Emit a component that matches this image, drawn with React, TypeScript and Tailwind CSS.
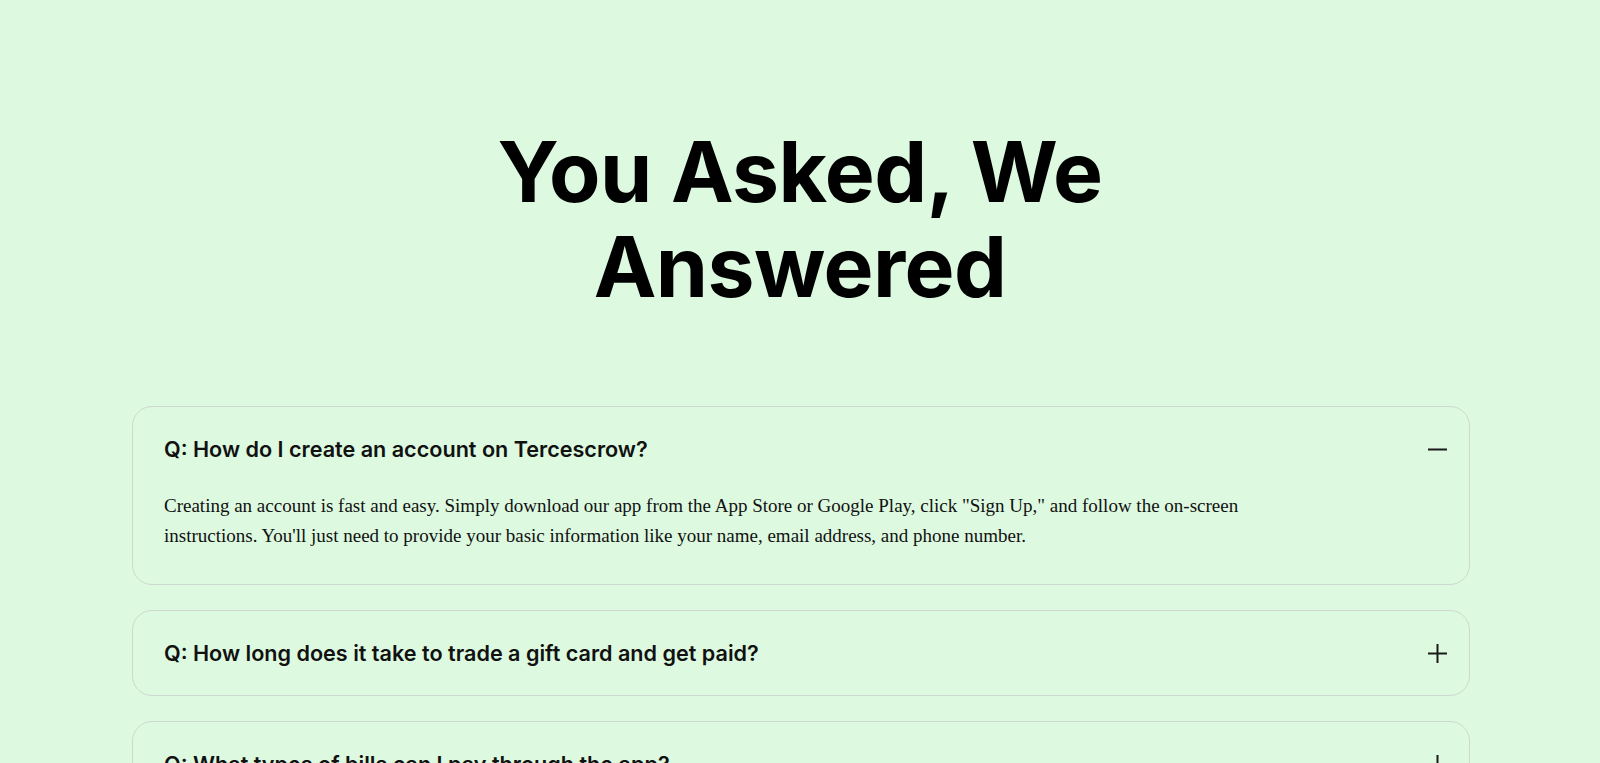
import { useState } from 'react';

const faqs = [
  {
    q: 'Q: How do I create an account on Tercescrow?',
    a: 'Creating an account is fast and easy. Simply download our app from the App Store or Google Play, click "Sign Up," and follow the on-screen instructions. You\'ll just need to provide your basic information like your name, email address, and phone number.',
  },
  {
    q: 'Q: How long does it take to trade a gift card and get paid?',
    a: 'Most trades are completed within minutes. Once your card is verified, your payment is credited to your wallet instantly.',
  },
  {
    q: 'Q: What types of bills can I pay through the app?',
    a: 'You can pay for airtime, data, electricity, cable TV subscriptions and more, all from one place.',
  },
];

function Icon({ open }: { open: boolean }) {
  return (
    <svg width="19" height="19" viewBox="0 0 19 19" fill="none" stroke="#1a1a1a" strokeWidth="2">
      <path d="M0 9.5h19" />
      {!open && <path d="M9.5 0v19" />}
    </svg>
  );
}

export default function App() {
  const [openIndex, setOpenIndex] = useState<number | null>(0);

  return (
    <div className="min-h-screen bg-[#ddf9e0] pb-24 font-['Liberation_Serif',serif]">
      {/* Heading */}
      <h1 className="mx-auto max-w-[760px] pt-[124px] text-center font-['Inter',sans-serif] text-[84px] font-bold leading-[95px] tracking-[-0.6px] text-black">
        You Asked, We Answered
      </h1>

      {/* FAQ list */}
      <div className="mt-[92px] ml-[132px] mr-[130px] flex flex-col gap-[25px]">
        {faqs.map((item, i) => {
          const open = openIndex === i;
          return (
            <div key={i} className="rounded-[20px] border border-[#cfd8d0] pl-[31px] pr-[22px]">
              <button
                className="flex w-full cursor-pointer items-center justify-between py-[27px] text-left"
                onClick={() => setOpenIndex(open ? null : i)}
              >
                <span className="font-['Inter',sans-serif] text-[21.6px] font-semibold leading-[30px] text-[#111]">{item.q}</span>
                <Icon open={open} />
              </button>
              {open && (
                <p className="pb-[33px] max-w-[1120px] text-[19px] leading-[30px] text-[#111]">{item.a}</p>
              )}
            </div>
          );
        })}
      </div>
    </div>
  );
}
